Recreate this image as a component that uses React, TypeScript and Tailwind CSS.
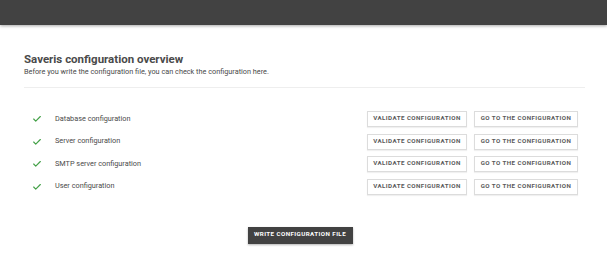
import { Check } from 'lucide-react'

const SECTIONS = [
  'Database configuration',
  'Server configuration',
  'SMTP server configuration',
  'User configuration',
]

const font = { fontFamily: 'Roboto, "Liberation Sans", sans-serif' }

function OutlineButton({ label, width }: { label: string; width: string }) {
  return (
    <button
      type="button"
      className={`${width} h-[16px] flex items-center justify-center border border-[#dcdcdc] bg-white text-[6.2px] font-bold tracking-[0.07em] text-[#5a5a5a] shadow-[0_1px_1px_rgba(0,0,0,0.06)]`}
    >
      {label}
    </button>
  )
}

export default function App() {
  return (
    <div className="w-[607px] h-[254px] bg-white overflow-hidden" style={font}>
      <header className="h-[25px] bg-[#424242] shadow-[0_1px_3px_rgba(0,0,0,0.35)]" />

      <main className="px-[24px] pt-[28px]">
        <h1 className="text-[11.5px] leading-[13px] font-bold text-[#4a4a4a]">Saveris configuration overview</h1>
        <p className="text-[7.3px] leading-[9px] text-[#4a4a4a] mt-[1px]">
          Before you write the configuration file, you can check the configuration here.
        </p>

        <div className="mt-[11px] w-[561px] h-px bg-[#eeeeee]" />

        <div className="mt-[23px] flex flex-col gap-[6.5px]">
          {SECTIONS.map((name) => (
            <div key={name} className="flex items-center h-[16px]">
              <Check className="ml-[8px] w-[10px] h-[10px] text-[#43a047]" strokeWidth={2.75} />
              <span className="ml-[13px] text-[7.3px] text-[#4a4a4a]">{name}</span>
              <div className="ml-auto mr-[5px] flex gap-[7px]">
                <OutlineButton label="VALIDATE CONFIGURATION" width="w-[100px]" />
                <OutlineButton label="GO TO THE CONFIGURATION" width="w-[104px]" />
              </div>
            </div>
          ))}
        </div>

        <div className="mt-[32px] flex justify-center pr-[7px]">
          <button
            type="button"
            className="w-[105px] h-[17px] bg-[#424242] text-white text-[6.2px] font-bold tracking-[0.07em] shadow-[0_1px_2px_rgba(0,0,0,0.3)]"
          >
            WRITE CONFIGURATION FILE
          </button>
        </div>
      </main>
    </div>
  )
}
